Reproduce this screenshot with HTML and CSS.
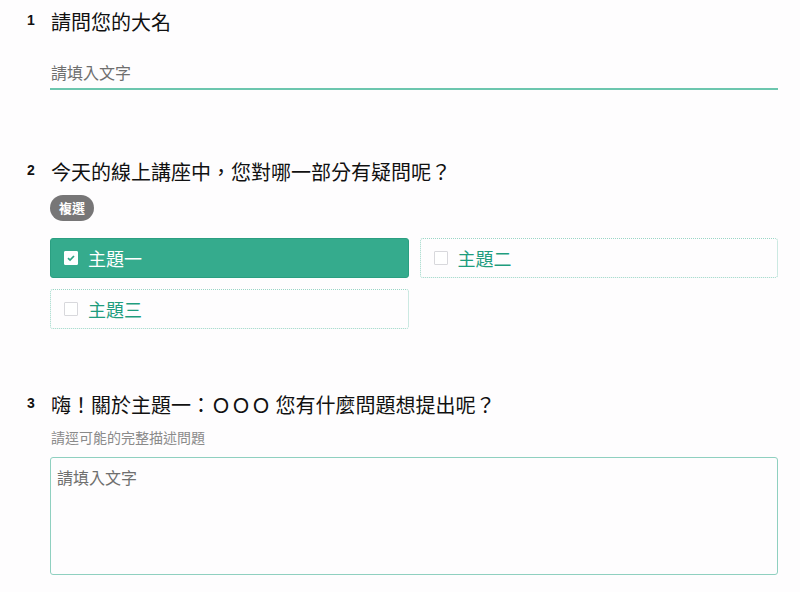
FILE: index.html
```html
<!DOCTYPE html>
<html lang="zh-Hant">
<head>
  <meta charset="UTF-8" />
  <meta name="viewport" content="width=device-width, initial-scale=1.0"/>
  <title>線上講座問卷</title>
  <link rel="stylesheet" href="styles.css">
</head>
<body>
  <form class="survey">
    <section class="question q-name">
      <span class="num">1</span>
      <div class="body">
        <h2 class="title">請問您的大名</h2>
        <input class="line-input" type="text" placeholder="請填入文字">
      </div>
    </section>

    <section class="question q-topics">
      <span class="num">2</span>
      <div class="body">
        <h2 class="title">今天的線上講座中，您對哪一部分有疑問呢？</h2>
        <span class="tag">複選</span>
        <div class="options">
          <label class="option checked"><span class="box"><svg viewBox="0 0 14 14" width="14" height="14"><path d="M3.5 7.2l2.4 2.3 4.6-4.8" fill="none" stroke="#2fa585" stroke-width="2"/></svg></span>主題一</label>
          <label class="option"><span class="box"></span>主題二</label>
          <label class="option"><span class="box"></span>主題三</label>
        </div>
      </div>
    </section>

    <section class="question q-detail">
      <span class="num">3</span>
      <div class="body">
        <h2 class="title">嗨！關於主題一：ＯＯＯ 您有什麼問題想提出呢？</h2>
        <p class="desc">請逕可能的完整描述問題</p>
        <textarea class="area" placeholder="請填入文字"></textarea>
      </div>
    </section>
  </form>
</body>
</html>
```

FILE: styles.css
```css
body {
  margin: 0;
  background: #fefdfe;
  color: #111;
  font-family: "Noto Sans CJK TC", "Noto Sans", sans-serif;
}
.survey {
  width: 752px;
  padding: 8px 0 0 26px;
}
.question {
  display: flex;
}
.num {
  width: 23px;
  flex: none;
  padding-left: 1px;
  font-family: "Liberation Sans", Arial, sans-serif;
  font-weight: bold;
  font-size: 14px;
  line-height: 25px;
}
.body {
  flex: 1;
}
.title {
  margin: 0 0 0 1px;
  font-size: 20px;
  font-weight: normal;
  line-height: 28px;
}
.line-input {
  display: block;
  box-sizing: border-box;
  width: 100%;
  height: 34px;
  margin-top: 20px;
  padding: 0 1px;
  border: none;
  border-bottom: 2px solid #6cc6ae;
  background: transparent;
  font-family: inherit;
  font-size: 16px;
}
.line-input::placeholder,
.area::placeholder {
  color: #6f6f6f;
}
.q-topics {
  margin-top: 68px;
}
.tag {
  display: inline-block;
  margin-top: 9px;
  padding: 0 9px;
  height: 26px;
  line-height: 26px;
  border-radius: 13px;
  background: #777677;
  color: #fff;
  font-size: 13px;
  font-weight: bold;
}
.options {
  display: grid;
  grid-template-columns: 1fr 1fr;
  gap: 11px;
  margin-top: 17px;
}
.option {
  display: flex;
  align-items: center;
  gap: 10px;
  box-sizing: border-box;
  height: 40px;
  padding: 0 13px;
  border: 1px dotted #9ad6c6;
  border-radius: 3px;
  color: #1f9d7e;
  font-size: 18px;
}
.option.checked {
  background: #35ab8d;
  border: 1px solid #2b9f81;
  color: #fff;
}
.box {
  width: 12px;
  height: 12px;
  border: 1px solid #d8d8dc;
  border-radius: 1px;
  background: #fff;
  display: flex;
  align-items: center;
  justify-content: center;
}
.checked .box {
  border-color: #fff;
}
.q-detail {
  margin-top: 62px;
}
.desc {
  margin: 8px 0 0 1px;
  font-size: 14px;
  line-height: 20px;
  color: #8a8a8a;
}
.area {
  display: block;
  box-sizing: border-box;
  width: 100%;
  height: 118px;
  margin-top: 10px;
  padding: 7px 6px;
  border: 1.5px solid #8fd0c0;
  border-radius: 3px;
  background: transparent;
  font-family: inherit;
  font-size: 16px;
  resize: none;
}
```
